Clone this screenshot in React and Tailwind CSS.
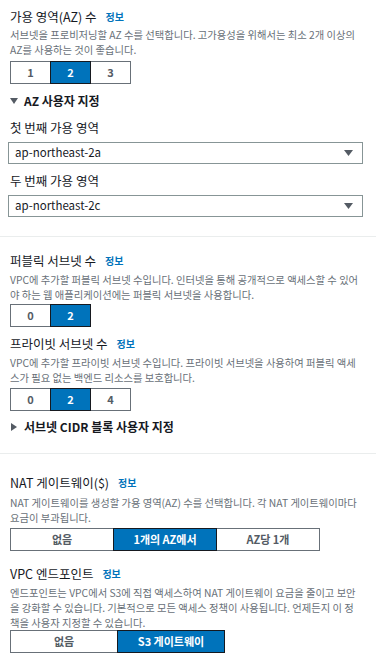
import React from 'react';

const font = { fontFamily: '"Noto Sans CJK KR", "Noto Sans", sans-serif' };

const Title = ({ children, className = '' }) => (
  <div className={`flex items-center text-[12.5px] leading-[18px] text-[#16191f] ${className}`}>
    <span>{children}</span>
    <span className="ml-[9px] text-[10px] font-bold text-[#0073bb]">정보</span>
  </div>
);

const Desc = ({ lines, className = '' }) => (
  <div className={`text-[10.3px] leading-[15px] text-[#687078] whitespace-nowrap ${className}`}>
    {lines.map((l, i) => (
      <div key={i}>{l}</div>
    ))}
  </div>
);

const Segments = ({ items, selected, width, className = '' }) => (
  <div className={`flex ${className}`}>
    {items.map((item, i) => {
      const on = i === selected;
      return (
        <div
          key={item}
          style={{ width }}
          className={`relative h-[23px] flex items-center justify-center border text-[11px] font-bold ${
            i > 0 ? '-ml-px' : ''
          } ${on ? 'z-10 bg-[#0073bb] border-[#16191f] text-white' : 'bg-white border-[#687078] text-[#545b64]'}`}
        >
          {item}
        </div>
      );
    })}
  </div>
);

const Select = ({ value, className = '' }) => (
  <div
    className={`ml-[-2px] w-[355px] h-[22px] flex items-center justify-between border border-[#879596] bg-white pl-[6px] pr-[9px] text-[11.5px] text-[#16191f] ${className}`}
  >
    <span>{value}</span>
    <svg width="9" height="6" viewBox="0 0 9 6">
      <path d="M0 0 H9 L4.5 6 Z" fill="#545b64" />
    </svg>
  </div>
);

const Toggle = ({ open, children, className = '' }) => (
  <div className={`flex items-center text-[12px] leading-[18px] font-bold text-[#16191f] ${className}`}>
    <svg width="8" height="8" viewBox="0 0 8 8" className="mr-[6px]">
      {open ? <path d="M0 1 H8 L4 7 Z" fill="#545b64" /> : <path d="M1 0 V8 L7 4 Z" fill="#545b64" />}
    </svg>
    <span>{children}</span>
  </div>
);

export default function App() {
  return (
    <div className="w-[376px] bg-white" style={font}>
      <div className="px-[10px]">
        <Title className="pt-[8px]">가용 영역(AZ) 수</Title>
        <Desc
          className="mt-[1px]"
          lines={[
            '서브넷을 프로비저닝할 AZ 수를 선택합니다. 고가용성을 위해서는 최소 2개 이상의',
            'AZ를 사용하는 것이 좋습니다.',
          ]}
        />
        <Segments className="mt-[4px]" items={['1', '2', '3']} selected={1} width={41} />
        <Toggle open className="mt-[8px]">AZ 사용자 지정</Toggle>
        <div className="mt-[9px] text-[12.5px] leading-[18px] text-[#16191f]">첫 번째 가용 영역</div>
        <Select className="mt-[5px]" value="ap-northeast-2a" />
        <div className="mt-[8px] text-[12.5px] leading-[18px] text-[#16191f]">두 번째 가용 영역</div>
        <Select className="mt-[5px]" value="ap-northeast-2c" />
      </div>
      <div className="mt-[19px] border-t border-[#eaeded]" />

      <div className="px-[10px]">
        <Title className="mt-[15px]">퍼블릭 서브넷 수</Title>
        <Desc
          className="mt-[2px]"
          lines={[
            'VPC에 추가할 퍼블릭 서브넷 수입니다. 인터넷을 통해 공개적으로 액세스할 수 있어',
            '야 하는 웹 애플리케이션에는 퍼블릭 서브넷을 사용합니다.',
          ]}
        />
        <Segments className="mt-[2px]" items={['0', '2']} selected={1} width={41} />
        <Title className="mt-[8px]">프라이빗 서브넷 수</Title>
        <Desc
          className="mt-[2px]"
          lines={[
            'VPC에 추가할 프라이빗 서브넷 수입니다. 프라이빗 서브넷을 사용하여 퍼블릭 액세',
            '스가 필요 없는 백엔드 리소스를 보호합니다.',
          ]}
        />
        <Segments className="mt-[3px]" items={['0', '2', '4']} selected={1} width={41} />
        <Toggle className="mt-[7px]">서브넷 CIDR 블록 사용자 지정</Toggle>
      </div>
      <div className="mt-[17px] border-t border-[#eaeded]" />

      <div className="px-[10px] pb-[20px]">
        <Title className="mt-[20px]">NAT 게이트웨이($)</Title>
        <Desc
          className="mt-[3px]"
          lines={[
            'NAT 게이트웨이를 생성할 가용 영역(AZ) 수를 선택합니다. 각 NAT 게이트웨이마다',
            '요금이 부과됩니다.',
          ]}
        />
        <Segments className="mt-[3px]" items={['없음', '1개의 AZ에서', 'AZ당 1개']} selected={1} width={104} />
        <Title className="mt-[14px]">VPC 엔드포인트</Title>
        <Desc
          className="mt-[2px]"
          lines={[
            '엔드포인트는 VPC에서 S3에 직접 액세스하여 NAT 게이트웨이 요금을 줄이고 보안',
            '을 강화할 수 있습니다. 기본적으로 모든 액세스 정책이 사용됩니다. 언제든지 이 정',
            '책을 사용자 지정할 수 있습니다.',
          ]}
        />
        <Segments className="mt-[0px]" items={['없음', 'S3 게이트웨이']} selected={1} width={108} />
      </div>
    </div>
  );
}
